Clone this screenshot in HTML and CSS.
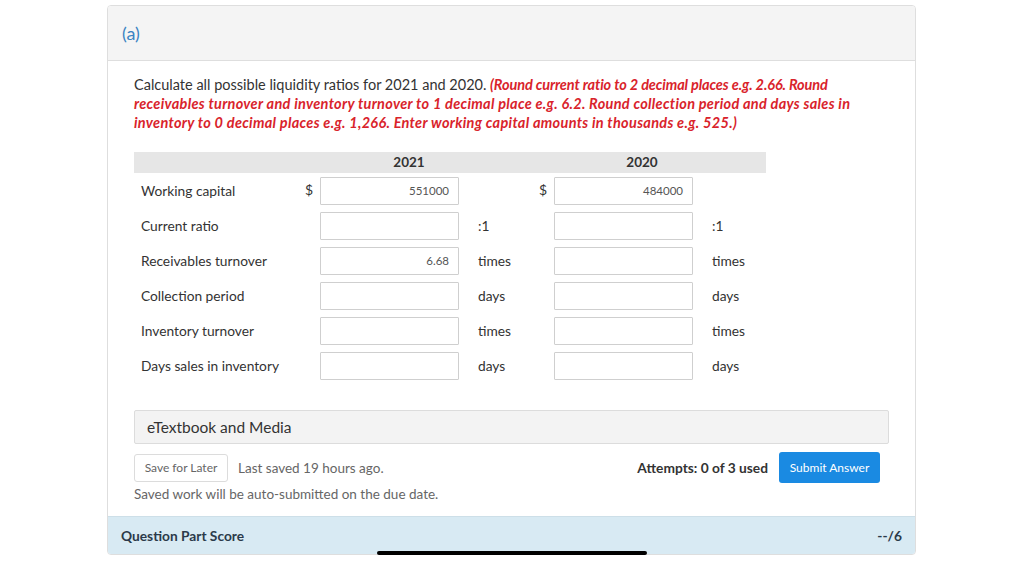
FILE: index.html
```html
<!DOCTYPE html>
<html>
<head>
<meta charset="utf-8">
<link rel="stylesheet" href="styles.css">
</head>
<body>
<div class="page">
  <div class="card">
    <div class="card-head">(a)</div>
    <div class="card-body">
      <p class="instr">Calculate all possible liquidity ratios for 2021 and 2020. <em><span class="tight">(Round current ratio to 2 decimal places e.g. 2.66. Round</span><br>receivables turnover and inventory turnover to 1 decimal place e.g. 6.2. Round collection period and days sales in<br>inventory to 0 decimal places e.g. 1,266. Enter working capital amounts in thousands e.g. 525.)</em></p>

      <div class="grid">
        <div class="hd hd-blank"></div>
        <div class="hd hd-year">2021</div>
        <div class="hd hd-year">2020</div>

        <div class="lbl">Working capital</div>
        <div class="cur">$</div><div class="inp">551000</div><div class="unit"></div>
        <div class="cur">$</div><div class="inp">484000</div><div class="unit"></div>

        <div class="lbl">Current ratio</div>
        <div class="cur"></div><div class="inp"></div><div class="unit">:1</div>
        <div class="cur"></div><div class="inp"></div><div class="unit">:1</div>

        <div class="lbl">Receivables turnover</div>
        <div class="cur"></div><div class="inp">6.68</div><div class="unit">times</div>
        <div class="cur"></div><div class="inp"></div><div class="unit">times</div>

        <div class="lbl">Collection period</div>
        <div class="cur"></div><div class="inp"></div><div class="unit">days</div>
        <div class="cur"></div><div class="inp"></div><div class="unit">days</div>

        <div class="lbl">Inventory turnover</div>
        <div class="cur"></div><div class="inp"></div><div class="unit">times</div>
        <div class="cur"></div><div class="inp"></div><div class="unit">times</div>

        <div class="lbl">Days sales in inventory</div>
        <div class="cur"></div><div class="inp"></div><div class="unit">days</div>
        <div class="cur"></div><div class="inp"></div><div class="unit">days</div>
      </div>

      <div class="media">eTextbook and Media</div>

      <div class="actions">
        <div class="left">
          <span class="btn-save">Save for Later</span>
          <span class="saved">Last saved 19 hours ago.</span>
        </div>
        <div class="right">
          <span class="attempts">Attempts: 0 of 3 used</span>
          <span class="btn-submit">Submit Answer</span>
        </div>
      </div>
      <div class="note">Saved work will be auto-submitted on the due date.</div>
    </div>
    <div class="card-foot">
      <span>Question Part Score</span>
      <span>--/6</span>
    </div>
  </div>
</div>
<div class="homebar"></div>
</body>
</html>
```

FILE: styles.css
```css
* { box-sizing: border-box; }
html, body { margin: 0; padding: 0; background: #fff; }
body {
  font-family: Lato, "Open Sans", sans-serif;
  color: #333;
  width: 1024px;
  height: 563px;
  overflow: hidden;
}
.page { padding: 5px 0 0 107px; }
.card {
  width: 809px;
  border: 1px solid #dedede;
  border-radius: 4px;
  overflow: hidden;
}
.card-head {
  height: 55px;
  background: #f4f4f4;
  border-bottom: 1px solid #dedede;
  padding: 16px 0 0 14px;
  font-size: 18px;
  color: #3a83c2;
  line-height: 22px;
}
.card-body { padding: 14px 26px 13px 26px; }
.instr {
  margin: 0;
  font-size: 14.5px;
  line-height: 19px;
  color: #333;
  white-space: nowrap;
}
.instr em {
  color: #d9232b;
  font-weight: bold;
  font-style: italic;
  letter-spacing: 0.3px;
}
.instr .tight { letter-spacing: -0.1px; }
.grid {
  margin-top: 20px;
  display: grid;
  grid-template-columns: 166px 20px 139px 59px 36px 139px 73px;
  grid-template-rows: 18px repeat(6, 28px);
  row-gap: 7px;
  width: 632px;
}
.hd {
  background: #e6e6e6;
  height: 21px;
  font-size: 13.5px;
  font-weight: bold;
  line-height: 21px;
  text-align: center;
  color: #333;
}
.hd-blank { grid-column: 1 / 2; }
.hd-year:nth-child(2) { grid-column: 2 / 5; }
.hd-year:nth-child(3) { grid-column: 5 / 8; }
.lbl {
  font-size: 13.75px;
  line-height: 28px;
  padding-left: 7px;
  color: #333;
}
.cur {
  font-size: 14px;
  line-height: 26px;
  text-align: right;
  padding-right: 7px;
}
.inp {
  border: 1px solid #cfcfcf;
  border-radius: 1px;
  background: #fff;
  font-size: 11.5px;
  color: #555;
  text-align: right;
  padding-right: 9px;
  line-height: 26px;
}
.unit {
  font-size: 13.75px;
  line-height: 28px;
  padding-left: 19px;
  color: #333;
}
.media {
  margin-top: 30px;
  height: 34px;
  background: #f3f3f3;
  border: 1px solid #dcdcdc;
  border-radius: 2px;
  font-size: 15.5px;
  line-height: 32px;
  padding-left: 12px;
  color: #333;
}
.actions {
  margin-top: 8px;
  display: flex;
  justify-content: space-between;
  align-items: center;
}
.left, .right { display: flex; align-items: center; }
.btn-save {
  display: inline-block;
  height: 28px;
  width: 94px;
  border: 1px solid #dcdcdc;
  border-radius: 3px;
  font-size: 12px;
  line-height: 26px;
  text-align: center;
  color: #666;
}
.saved {
  margin-left: 10px;
  font-size: 13.5px;
  color: #666;
}
.attempts {
  font-size: 13.75px;
  font-weight: bold;
  color: #333;
}
.btn-submit {
  display: inline-block;
  margin-left: 11px;
  margin-right: 9px;
  width: 101px;
  height: 31px;
  background: #1a8ae2;
  border-radius: 3px;
  color: #fff;
  font-size: 12px;
  line-height: 31px;
  text-align: center;
}
.note {
  margin-top: 2px;
  font-size: 13.5px;
  line-height: 18px;
  color: #666;
}
.card-foot {
  height: 38px;
  background: #d8eaf3;
  border-top: 1px solid #cddfe8;
  display: flex;
  justify-content: space-between;
  align-items: center;
  padding: 0 13px 0 13px;
  font-size: 13.75px;
  font-weight: bold;
  color: #2b3a4a;
}
.homebar {
  position: fixed;
  left: 377px;
  top: 551px;
  width: 270px;
  height: 4px;
  background: #000;
  border-radius: 2px;
}
```
